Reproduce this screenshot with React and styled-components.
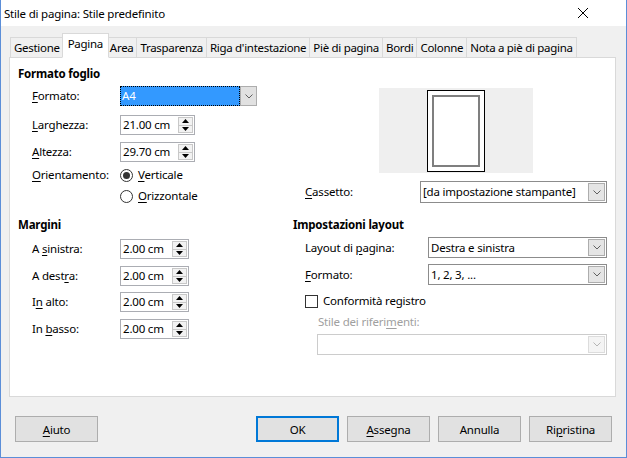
import React from 'react';
import styled, { createGlobalStyle } from 'styled-components';

const GlobalStyle = createGlobalStyle`
  html, body { margin: 0; padding: 0; background: #f0f0f0; }
  body {
    font-family: "Segoe UI", "Noto Sans", "Open Sans", sans-serif;
    font-size: 11.5px;
    letter-spacing: -0.2px;
    color: #000;
  }
  * { box-sizing: border-box; }
`;

const Window = styled.div`
  width: 627px;
  height: 458px;
  border: 1px solid #5b8ed8;
  border-top: none;
  background: #f0f0f0;
  display: flex;
  flex-direction: column;
  overflow: hidden;
`;

const TitleBar = styled.div`
  height: 26px;
  flex: none;
  background: #fff;
  display: flex;
  align-items: center;
  justify-content: space-between;
  padding: 0 37px 0 3px;
`;

const Body = styled.div`
  flex: 1;
  display: flex;
  flex-direction: column;
  padding: 7px 10px 0 8px;
`;

const TabStrip = styled.div`
  display: flex;
  align-items: flex-end;
  height: 25px;
  padding-left: 1px;
  position: relative;
  z-index: 1;
  letter-spacing: -0.3px;
`;

const Tab = styled.div`
  height: ${p => (p.$active ? 25 : 21)}px;
  padding: 0 ${p => (p.$active ? 5 : 3)}px;
  margin: 0 ${p => (p.$active ? -2 : 0)}px 0 ${p => (p.$active ? -2 : -1)}px;
  border: 1px solid #d9d9d9;
  border-bottom-color: ${p => (p.$active ? '#fff' : '#d9d9d9')};
  background: ${p => (p.$active ? '#fff' : '#f0f0f0')};
  position: relative;
  z-index: ${p => (p.$active ? 2 : 1)};
  display: flex;
  align-items: ${p => (p.$active ? 'flex-start' : 'center')};
  padding-top: ${p => (p.$active ? 2 : 0)}px;
  white-space: nowrap;
  line-height: 16px;
  &:first-child { margin-left: 0; }
`;

const Panel = styled.div`
  margin-top: -1px;
  height: 340px;
  border: 1px solid #d9d9d9;
  background: #fff;
  padding: 8px 8px 0 8px;
  display: grid;
  grid-template-columns: 275px 1fr;
  grid-template-rows: 151px auto;
`;

const Section = styled.div`
  display: flex;
  flex-direction: column;
`;

const Heading = styled.div`
  font-weight: bold;
  line-height: 16px;
  height: 16px;
`;

const Row = styled.div`
  display: flex;
  align-items: center;
  height: ${p => p.$h}px;
  margin-top: ${p => p.$mt}px;
  padding-left: ${p => p.$indent}px;
  line-height: 16px;
`;

const Label = styled.span`
  width: ${p => p.$w}px;
  flex: none;
  white-space: nowrap;
  color: ${p => (p.$disabled ? '#a0a0a0' : '#000')};
`;

const U = styled.span`
  text-decoration: underline;
  text-underline-offset: 2px;
`;

const Combo = styled.div`
  width: ${p => p.$w}px;
  height: ${p => p.$h}px;
  display: flex;
  border: 1px solid ${p => (p.$disabled ? '#cccccc' : '#8c8c8c')};
  background: #fff;
`;

const ComboValue = styled.div`
  flex: 1;
  display: flex;
  align-items: center;
  padding-left: 2px;
  white-space: nowrap;
  overflow: hidden;
`;

const DropButton = styled.div`
  width: 17px;
  flex: none;
  margin: 1px;
  border: 1px solid ${p => (p.$disabled ? '#dcdcdc' : '#adadad')};
  background: ${p => (p.$disabled ? '#f4f4f4' : '#e5e5e5')};
  display: flex;
  align-items: center;
  justify-content: center;
`;

const FocusCombo = styled.div`
  width: 137px;
  height: 20px;
  display: flex;
`;

const FocusValue = styled.div`
  flex: 1;
  background: #3399ff;
  color: #fff;
  border: 1px dotted #000;
  outline: 1px solid #3399ff;
  outline-offset: -2px;
  display: flex;
  align-items: center;
  padding-left: 1px;
`;

const FocusDrop = styled.div`
  width: 17px;
  border: 1px solid #adadad;
  background: #e1e1e1;
  display: flex;
  align-items: center;
  justify-content: center;
`;

const Spin = styled.div`
  width: ${p => p.$w}px;
  height: 20px;
  border: 1px solid #abadb3;
  background: #fff;
  display: flex;
`;

const SpinValue = styled.div`
  flex: 1;
  display: flex;
  align-items: center;
  padding-left: 2px;
  white-space: nowrap;
`;

const SpinButtons = styled.div`
  width: 15px;
  margin: 1px 1px 1px 0;
  border: 1px solid #c8c8c8;
  background: #f2f2f2;
  display: flex;
  flex-direction: column;
`;

const SpinHalf = styled.div`
  flex: 1;
  display: flex;
  align-items: center;
  justify-content: center;
  & + & { border-top: 1px solid #c8c8c8; }
`;

const Radio = styled.span`
  width: 13px;
  height: 13px;
  border-radius: 50%;
  border: 1px solid #333;
  background: #fff;
  flex: none;
  display: flex;
  align-items: center;
  justify-content: center;
  margin-right: 5px;
  &::after {
    content: '';
    display: ${p => (p.$checked ? 'block' : 'none')};
    width: 7px;
    height: 7px;
    border-radius: 50%;
    background: #333;
  }
`;

const Checkbox = styled.span`
  width: 13px;
  height: 13px;
  border: 1px solid #333;
  background: #fff;
  flex: none;
  margin-right: 5px;
`;

const Preview = styled.div`
  margin-top: 22px;
  margin-left: 86px;
  width: 154px;
  height: 85px;
  background: #efefef;
  display: flex;
  justify-content: center;
  padding-top: 2px;
`;

const Page = styled.div`
  width: 58px;
  height: 82px;
  border: 1px solid #000;
  background: #fff;
  padding: 4px;
`;

const PageInner = styled.div`
  width: 100%;
  height: 100%;
  border: 2px solid #7f7f7f;
`;

const ButtonRow = styled.div`
  display: flex;
  gap: 8px;
  padding: 19px 4px 0 6px;
`;

const Button = styled.div`
  width: 83px;
  height: 26px;
  border: ${p => (p.$default ? '2px solid #0078d7' : '1px solid #adadad')};
  background: #e1e1e1;
  display: flex;
  align-items: center;
  justify-content: center;
  margin-right: ${p => (p.$push ? 'auto' : '0')};
`;

const Chevron = ({ light }) => (
  <svg width="8" height="5" viewBox="0 0 8 5">
    <path d="M0.5 0.5 L4 4 L7.5 0.5" fill="none" stroke={light ? '#b5b5b5' : '#606060'} strokeWidth="1" />
  </svg>
);

const Arrow = ({ down }) => (
  <svg width="7" height="4" viewBox="0 0 7 4">
    <path d={down ? 'M0 0 L7 0 L3.5 4 Z' : 'M0 4 L7 4 L3.5 0 Z'} fill="#000" />
  </svg>
);

const CloseIcon = () => (
  <svg width="12" height="12" viewBox="0 0 12 12">
    <path d="M1 1 L11 11 M11 1 L1 11" stroke="#000" strokeWidth="1" />
  </svg>
);

const SpinField = ({ value, w }) => (
  <Spin $w={w}>
    <SpinValue>{value}</SpinValue>
    <SpinButtons>
      <SpinHalf><Arrow /></SpinHalf>
      <SpinHalf><Arrow down /></SpinHalf>
    </SpinButtons>
  </Spin>
);

const Select = ({ value, w, h, disabled }) => (
  <Combo $w={w} $h={h} $disabled={disabled}>
    <ComboValue>{value}</ComboValue>
    <DropButton $disabled={disabled}><Chevron light={disabled} /></DropButton>
  </Combo>
);

const tabs = ['Gestione', 'Pagina', 'Area', 'Trasparenza', "Riga d'intestazione", 'Piè di pagina', 'Bordi', 'Colonne', 'Nota a piè di pagina'];

export default function App() {
  return (
    <>
      <GlobalStyle />
      <Window>
        <TitleBar>
          <span>Stile di pagina: Stile predefinito</span>
          <CloseIcon />
        </TitleBar>
        <Body>
          <TabStrip>
            {tabs.map(t => (
              <Tab key={t} $active={t === 'Pagina'}>{t}</Tab>
            ))}
          </TabStrip>
          <Panel>
            <Section>
              <Heading>Formato foglio</Heading>
              <Row $h={20} $mt={4} $indent={14}>
                <Label $w={88}><U>F</U>ormato:</Label>
                <FocusCombo>
                  <FocusValue>A4</FocusValue>
                  <FocusDrop><Chevron /></FocusDrop>
                </FocusCombo>
              </Row>
              <Row $h={20} $mt={9} $indent={14}>
                <Label $w={88}><U>L</U>arghezza:</Label>
                <SpinField value="21.00 cm" w={75} />
              </Row>
              <Row $h={20} $mt={7} $indent={14}>
                <Label $w={88}><U>A</U>ltezza:</Label>
                <SpinField value="29.70 cm" w={75} />
              </Row>
              <Row $h={14} $mt={6} $indent={14}>
                <Label $w={88}><U>O</U>rientamento:</Label>
                <Radio $checked />
                <span><U>V</U>erticale</span>
              </Row>
              <Row $h={14} $mt={7} $indent={102}>
                <Radio />
                <span><U>O</U>rizzontale</span>
              </Row>
            </Section>
            <Section>
              <Preview>
                <Page><PageInner /></Page>
              </Preview>
              <Row $h={22} $mt={8} $indent={12}>
                <Label $w={115}><U>C</U>assetto:</Label>
                <Select value="[da impostazione stampante]" w={187} h={22} />
              </Row>
            </Section>
            <Section>
              <Heading>Margini</Heading>
              <Row $h={20} $mt={6} $indent={14}>
                <Label $w={88}>A <U>s</U>inistra:</Label>
                <SpinField value="2.00 cm" w={69} />
              </Row>
              <Row $h={20} $mt={7} $indent={14}>
                <Label $w={88}>A dest<U>r</U>a:</Label>
                <SpinField value="2.00 cm" w={69} />
              </Row>
              <Row $h={20} $mt={6} $indent={14}>
                <Label $w={88}>I<U>n</U> alto:</Label>
                <SpinField value="2.00 cm" w={69} />
              </Row>
              <Row $h={20} $mt={7} $indent={14}>
                <Label $w={88}>In <U>b</U>asso:</Label>
                <SpinField value="2.00 cm" w={69} />
              </Row>
            </Section>
            <Section>
              <Heading>Impostazioni layout</Heading>
              <Row $h={21} $mt={4} $indent={12}>
                <Label $w={123}>Layout di <U>p</U>agina:</Label>
                <Select value="Destra e sinistra" w={179} h={21} />
              </Row>
              <Row $h={21} $mt={6} $indent={12}>
                <Label $w={123}><U>F</U>ormato:</Label>
                <Select value="1, 2, 3, ..." w={179} h={21} />
              </Row>
              <Row $h={14} $mt={9} $indent={12}>
                <Checkbox />
                <span>Conformità registro</span>
              </Row>
              <Row $h={16} $mt={6} $indent={25}>
                <Label $w={200} $disabled>Stile dei riferi<U>m</U>enti:</Label>
              </Row>
              <Row $h={21} $mt={4} $indent={24}>
                <Select value="" w={290} h={21} disabled />
              </Row>
            </Section>
          </Panel>
          <ButtonRow>
            <Button $push><span><U>A</U>iuto</span></Button>
            <Button $default>OK</Button>
            <Button><span><U>A</U>ssegna</span></Button>
            <Button>Annulla</Button>
            <Button><span>Ri<U>p</U>ristina</span></Button>
          </ButtonRow>
        </Body>
      </Window>
    </>
  );
}
